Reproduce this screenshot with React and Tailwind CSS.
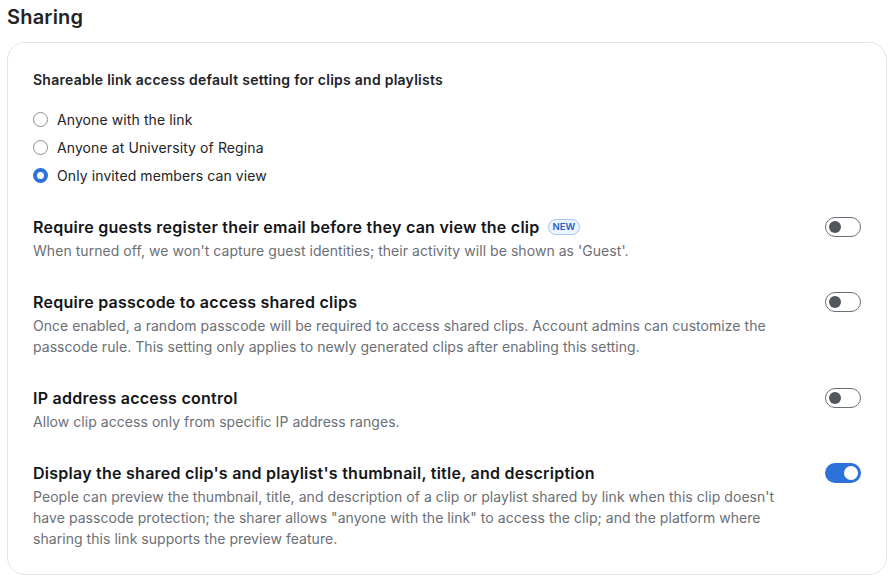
import React, { useState } from "react";

const font = { fontFamily: "Inter, 'Noto Sans', sans-serif" };

const Radio = ({ checked, label }) => (
    <label className="flex items-center h-[28px] gap-[9px] cursor-pointer">
        {checked ? (
            <span className="w-[15px] h-[15px] rounded-full border-[4px] border-[#2d72db] bg-white"></span>
        ) : (
            <span className="w-[15px] h-[15px] rounded-full border border-[#8a8f98] bg-white"></span>
        )}
        <span className="text-[14px] tracking-[0.1px] text-[#222326]">{label}</span>
    </label>
);

const Toggle = ({ on }) =>
    on ? (
        <span className="flex items-center justify-end w-[36px] h-[20px] rounded-full bg-[#2d72db] px-[3px]">
            <span className="w-[14px] h-[14px] rounded-full bg-white"></span>
        </span>
    ) : (
        <span className="flex items-center w-[36px] h-[20px] rounded-full border border-[#6b6f76] bg-white px-[3px]">
            <span className="w-[12px] h-[12px] rounded-full bg-[#52565e]"></span>
        </span>
    );

const SettingRow = ({ title, badge, desc, on, first }) => (
    <div className={first ? "flex items-start justify-between mt-[27px]" : "flex items-start justify-between mt-[30px]"}>
        <div className="max-w-[770px]">
            <div className="flex items-center gap-[8px] h-[22px]">
                <h3 className="text-[16px] leading-[22px] font-semibold tracking-[0.25px] text-[#131619]">{title}</h3>
                {badge && (
                    <span className="text-[9.5px] leading-[14px] font-semibold text-[#1c5fc4] bg-[#eef4fd] border border-[#a9c6f2] rounded-full px-[4px]">NEW</span>
                )}
            </div>
            <p className="mt-[2px] text-[14px] leading-[21px] tracking-[0.05px] text-[#6b6f76]">{desc}</p>
        </div>
        <div className="pt-[1px] pr-[1px]">
            <Toggle on={on} />
        </div>
    </div>
);

export default function App() {
    const [rows] = useState([
        {
            title: "Require guests register their email before they can view the clip",
            badge: true,
            desc: "When turned off, we won't capture guest identities; their activity will be shown as 'Guest'.",
            on: false,
        },
        {
            title: "Require passcode to access shared clips",
            desc: "Once enabled, a random passcode will be required to access shared clips. Account admins can customize the passcode rule. This setting only applies to newly generated clips after enabling this setting.",
            on: false,
        },
        {
            title: "IP address access control",
            desc: "Allow clip access only from specific IP address ranges.",
            on: false,
        },
        {
            title: "Display the shared clip's and playlist's thumbnail, title, and description",
            desc: "People can preview the thumbnail, title, and description of a clip or playlist shared by link when this clip doesn't have passcode protection; the sharer allows \"anyone with the link\" to access the clip; and the platform where sharing this link supports the preview feature.",
            on: true,
        },
    ]);

    return (
        <div className="bg-white min-h-screen w-[894px] px-[7px] pt-[4px]" style={font}>
            <h2 className="text-[20px] leading-[26px] font-semibold tracking-[0.2px] text-[#222326]">Sharing</h2>
            <div className="mt-[12px] border border-[#e3e4e6] rounded-[18px] pl-[25px] pr-[24px] pt-[27px] pb-[25px] w-[880px]">
                <h4 className="text-[14px] leading-[20px] font-semibold tracking-[0.25px] text-[#222326]">Shareable link access default setting for clips and playlists</h4>
                <div className="mt-[15px] flex flex-col">
                    <Radio label="Anyone with the link" />
                    <Radio label="Anyone at University of Regina" />
                    <Radio checked label="Only invited members can view" />
                </div>
                {rows.map((r, i) => (
                    <SettingRow key={r.title} first={i === 0} {...r} />
                ))}
            </div>
        </div>
    );
}
